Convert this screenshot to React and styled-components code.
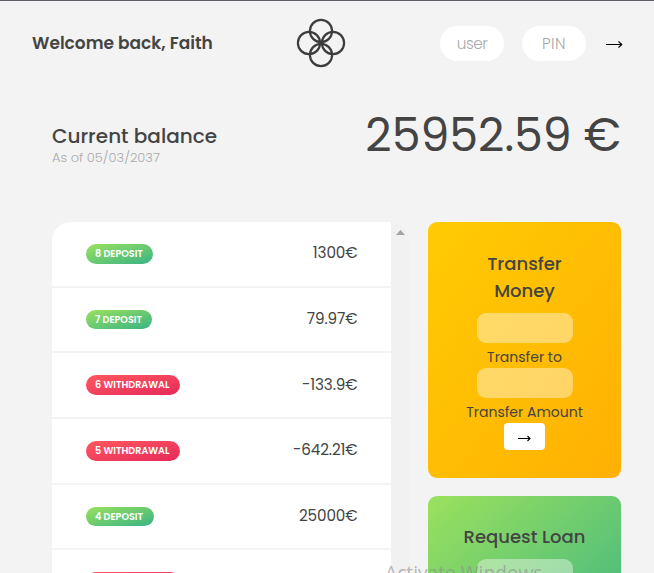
import React from 'react';
import styled, { createGlobalStyle } from 'styled-components';

const GlobalStyle = createGlobalStyle`
  *, *::before, *::after { box-sizing: border-box; }
  html, body { margin: 0; padding: 0; background: #f3f3f3; overflow: hidden; }
  body, input, button { font-family: Poppins, Inter, "Liberation Sans", sans-serif; color: #444; }
`;

const Page = styled.div`
  position: relative;
  height: 573px;
  overflow: hidden;
  border-top: 1px solid #605c66;
  background: #f3f3f3;
`;

const Nav = styled.nav`
  display: grid;
  grid-template-columns: 264px 50px 1fr;
  align-items: center;
  height: 85px;
  padding: 0 28px 0 32px;
`;

const Welcome = styled.p`
  margin: 0 0 2px;
  font-size: 17px;
  font-weight: 600;
  line-height: 26px;
  white-space: nowrap;
`;

const Logo = styled.svg`
  display: block;
  width: 50px;
  height: 50px;
  margin-bottom: 1px;
  fill: none;
  stroke: #3c3c3c;
  stroke-width: 2.2;
`;

const Login = styled.form`
  display: flex;
  justify-content: flex-end;
  align-items: center;
  gap: 18px;
`;

const LoginInput = styled.input`
  width: 64px;
  height: 35px;
  padding: 0;
  border: 0;
  border-radius: 18px;
  background: #fff;
  font-size: 15.3px;
  font-weight: 300;
  text-align: center;
  letter-spacing: ${(p) => p.$spacing || '0'};
  &::placeholder { color: #aaa; opacity: 1; }
`;

const LoginButton = styled.button`
  display: flex;
  width: 20px;
  margin-left: 2px;
  padding: 2px 0 0;
  border: 0;
  background: none;
`;

const Arrow = styled.svg`
  display: block;
  width: ${(p) => p.$width}px;
  height: 9px;
  fill: none;
  stroke: #000;
  stroke-width: 1.1;
`;

const Balance = styled.section`
  display: flex;
  justify-content: space-between;
  height: 136px;
  padding: 0 33px 0 52px;
`;

const BalanceInfo = styled.div`
  padding-top: 36px;
`;

const BalanceLabel = styled.p`
  margin: 0;
  font-size: 20px;
  font-weight: 500;
  line-height: 28px;
  white-space: nowrap;
`;

const BalanceDate = styled.p`
  margin: 0;
  color: #aaa;
  font-size: 13px;
  font-weight: 300;
  line-height: 15px;
  white-space: nowrap;
`;

const BalanceValue = styled.p`
  margin: 0;
  padding-top: 20px;
  font-size: 45.8px;
  font-weight: 400;
  line-height: 58px;
  white-space: nowrap;
`;

const Main = styled.main`
  display: grid;
  grid-template-columns: 358px 193px;
  column-gap: 18px;
  height: 351px;
  padding-left: 52px;
`;

const Movements = styled.div`
  display: flex;
  height: 351px;
  overflow: hidden;
  border-radius: 19px 19px 0 0;
  background: #fff;
`;

const MovementList = styled.div`
  flex: 1;
`;

const MovementRow = styled.div`
  display: flex;
  align-items: center;
  justify-content: space-between;
  height: 65.65px;
  padding: 0 33.5px 0 34px;
  border-bottom: 2px solid #f3f3f3;
`;

const badgeGradients = {
  deposit: 'linear-gradient(to top left, #39b385, #9be15d)',
  withdrawal: 'linear-gradient(to top left, #e52a5a, #ff585f)',
};

const Badge = styled.div`
  width: ${(p) => p.$width}px;
  height: 19.6px;
  padding-left: 9px;
  border-radius: 10px;
  background: ${(p) => badgeGradients[p.$type]};
  color: #fff;
  font-size: 9.6px;
  font-weight: 600;
  line-height: 19px;
  white-space: nowrap;
  text-transform: uppercase;
`;

const Amount = styled.div`
  padding-bottom: 1px;
  font-size: 15.2px;
  font-weight: 400;
  line-height: 22px;
  white-space: nowrap;
  letter-spacing: -0.1px;
`;

const ScrollTrack = styled.div`
  display: flex;
  justify-content: center;
  width: 19px;
  padding-top: 8px;
  background: #f1f1f1;
`;

const ScrollArrow = styled.svg`
  width: 9px;
  height: 5px;
  fill: #a3a3a3;
`;

const Operations = styled.div`
  display: flex;
  flex-direction: column;
  gap: 18px;
`;

const operationGradients = {
  transfer: 'linear-gradient(to top left, #ffb003, #ffcb03)',
  loan: 'linear-gradient(to top left, #39b385, #9be15d)',
};

const Operation = styled.section`
  display: flex;
  flex-direction: column;
  align-items: center;
  flex: none;
  height: ${(p) => p.$height}px;
  padding: ${(p) => p.$top}px 30px 0;
  border-radius: 9px;
  background: ${(p) => operationGradients[p.$type]};
`;

const OperationTitle = styled.h2`
  width: ${(p) => p.$width}px;
  margin: 0 0 9px;
  font-size: 18px;
  font-weight: 500;
  line-height: 27px;
  text-align: center;
`;

const OperationInput = styled.input`
  width: 96px;
  height: 30px;
  border: 0;
  border-radius: 9px;
  background: rgba(255, 255, 255, 0.4);
`;

const OperationLabel = styled.label`
  height: 25px;
  font-size: 14px;
  line-height: 29px;
  white-space: nowrap;
`;

const OperationButton = styled.button`
  display: flex;
  align-items: center;
  justify-content: center;
  width: 41px;
  height: 27px;
  padding: 4px 0 0;
  border: 0;
  border-radius: 4px;
  background: #fff;
`;

const Watermark = styled.div`
  position: absolute;
  left: 385px;
  top: 558px;
  color: rgba(140, 140, 140, 0.6);
  font-family: "Segoe UI", "Open Sans", sans-serif;
  font-size: 19.2px;
  line-height: 27px;
  white-space: nowrap;
`;

const movements = [
  { id: 8, type: 'deposit', amount: '1300€', width: 67 },
  { id: 7, type: 'deposit', amount: '79.97€', width: 66 },
  { id: 6, type: 'withdrawal', amount: '-133.9€', width: 94 },
  { id: 5, type: 'withdrawal', amount: '-642.21€', width: 94 },
  { id: 4, type: 'deposit', amount: '25000€', width: 68 },
  { id: 3, type: 'withdrawal', amount: '', width: 94 },
];

export default function App() {
  return (
    <>
      <GlobalStyle />
      <Page>
        <Nav>
          <Welcome>Welcome back, Faith</Welcome>
          <Logo viewBox="0 0 50 50">
            <circle cx="25" cy="13" r="11.1" />
            <circle cx="13" cy="25" r="11.1" />
            <circle cx="37" cy="25" r="11.1" />
            <circle cx="25" cy="37" r="11.1" />
            <path d="M23.5 23.5L26.5 26.5M26.5 23.5L23.5 26.5" />
          </Logo>
          <Login>
            <LoginInput placeholder="user" $spacing="-0.5px" />
            <LoginInput placeholder="PIN" $spacing="0.5px" />
            <LoginButton type="button" aria-label="Log in">
              <Arrow $width={17} viewBox="0 0 17 9">
                <path d="M0 4.5H16M12.5 1.5L15.8 4.5L12.5 7.5" />
              </Arrow>
            </LoginButton>
          </Login>
        </Nav>
        <Balance>
          <BalanceInfo>
            <BalanceLabel>Current balance</BalanceLabel>
            <BalanceDate>As of 05/03/2037</BalanceDate>
          </BalanceInfo>
          <BalanceValue>25952.59 €</BalanceValue>
        </Balance>
        <Main>
          <Movements>
            <MovementList>
              {movements.map((m) => (
                <MovementRow key={m.id}>
                  <Badge $type={m.type} $width={m.width}>{m.amount && `${m.id} ${m.type}`}</Badge>
                  <Amount>{m.amount}</Amount>
                </MovementRow>
              ))}
            </MovementList>
            <ScrollTrack>
              <ScrollArrow viewBox="0 0 9 5"><path d="M0 5L4.5 0L9 5Z" /></ScrollArrow>
            </ScrollTrack>
          </Movements>
          <Operations>
            <Operation $type="transfer" $height={256} $top={28}>
              <OperationTitle $width={90}>Transfer Money</OperationTitle>
              <OperationInput />
              <OperationLabel>Transfer to</OperationLabel>
              <OperationInput />
              <OperationLabel>Transfer Amount</OperationLabel>
              <OperationButton type="button" aria-label="Transfer">
                <Arrow $width={13} viewBox="0 0 13 9">
                  <path d="M0 4.5H12M9.5 2L12 4.5L9.5 7" />
                </Arrow>
              </OperationButton>
            </Operation>
            <Operation $type="loan" $height={175} $top={27}>
              <OperationTitle $width={150}>Request Loan</OperationTitle>
              <OperationInput />
            </Operation>
          </Operations>
        </Main>
        <Watermark>Activate Windows</Watermark>
      </Page>
    </>
  );
}
